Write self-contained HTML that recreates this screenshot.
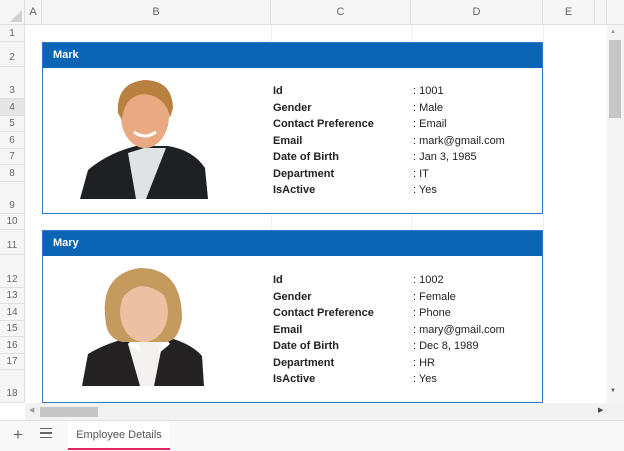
<html><head><style>
body{margin:0;width:624px;height:451px;overflow:hidden;background:#fff;font-family:"Liberation Sans",Arial,sans-serif;position:relative}
div{position:absolute;box-sizing:border-box}
.ch{top:0;height:25px;background:#f6f6f6;border-right:1px solid #e0e0e0;border-bottom:1px solid #e0e0e0;font-size:11px;color:#666;text-align:center;line-height:25px}
.rh{left:0;width:25px;background:#f6f6f6;border-bottom:1px solid #e0e0e0;border-right:1px solid #e0e0e0;font-size:10px;color:#666;text-align:center}
.card{left:42px;width:501px;border:1px solid #2e7bcf;background:#fff}
.hd{left:0;top:0;width:100%;height:25px;background:#0b64b4;color:#fff;font-weight:bold;font-size:11px;line-height:24px;padding-left:10px}
.t{font-size:11px;color:#222;line-height:16.5px;white-space:nowrap}
.t b{font-weight:bold}
</style></head><body>
<div style="left:0;top:0;width:25px;height:25px;background:#f6f6f6;border-right:1px solid #e0e0e0;border-bottom:1px solid #e0e0e0"><svg width="24" height="24"><polygon points="22,10 22,22 10,22" fill="#d0d0d0"/></svg></div>
<div class="ch" style="left:25px;width:17px">A</div>
<div class="ch" style="left:42px;width:229px">B</div>
<div class="ch" style="left:271px;width:140px">C</div>
<div class="ch" style="left:411px;width:132px">D</div>
<div class="ch" style="left:543px;width:52px">E</div>
<div class="ch" style="left:595px;width:12px"></div>
<div class="ch" style="left:607px;width:17px;border-right:none"></div>
<div class="rh" style="top:25px;height:17px;line-height:17px">1</div>
<div class="rh" style="top:42px;height:25px;line-height:32px">2</div>
<div class="rh" style="top:67px;height:32px;line-height:48px">3</div>
<div class="rh" style="top:99px;height:17px;line-height:17px;background:#e6e6e6">4</div>
<div class="rh" style="top:116px;height:16px;line-height:16px">5</div>
<div class="rh" style="top:132px;height:17px;line-height:17px">6</div>
<div class="rh" style="top:149px;height:16px;line-height:16px">7</div>
<div class="rh" style="top:165px;height:17px;line-height:17px">8</div>
<div class="rh" style="top:182px;height:32px;line-height:48px">9</div>
<div class="rh" style="top:214px;height:16px;line-height:16px">10</div>
<div class="rh" style="top:230px;height:25px;line-height:32px">11</div>
<div class="rh" style="top:255px;height:33px;line-height:50px">12</div>
<div class="rh" style="top:288px;height:16px;line-height:16px">13</div>
<div class="rh" style="top:304px;height:17px;line-height:17px">14</div>
<div class="rh" style="top:321px;height:16px;line-height:16px">15</div>
<div class="rh" style="top:337px;height:17px;line-height:17px">16</div>
<div class="rh" style="top:354px;height:16px;line-height:16px">17</div>
<div class="rh" style="top:370px;height:33px;line-height:48px">18</div>
<div style="left:271px;top:25px;width:1px;height:378px;background:#f0f0f0"></div>
<div style="left:411px;top:25px;width:1px;height:378px;background:#f0f0f0"></div>
<div style="left:543px;top:25px;width:1px;height:378px;background:#f0f0f0"></div>

<div class="card" style="top:42px;height:172px"><div class="hd">Mark</div></div>
<div class="card" style="top:230px;height:173px"><div class="hd">Mary</div></div>

<div class="t" style="left:273px;top:83px"><b>Id<br>Gender<br>Contact Preference<br>Email<br>Date of Birth<br>Department<br>IsActive</b></div>
<div class="t" style="left:413px;top:83px">: 1001<br>: Male<br>: Email<br>: mark@gmail.com<br>: Jan 3, 1985<br>: IT<br>: Yes</div>
<div class="t" style="left:273px;top:272px"><b>Id<br>Gender<br>Contact Preference<br>Email<br>Date of Birth<br>Department<br>IsActive</b></div>
<div class="t" style="left:413px;top:272px">: 1002<br>: Female<br>: Phone<br>: mary@gmail.com<br>: Dec 8, 1989<br>: HR<br>: Yes</div>

<svg style="position:absolute;left:78px;top:78px" width="132" height="124">
<path d="M2,121 L10,92 Q30,75 58,68 L90,68 Q115,72 127,90 L130,121 Z" fill="#1f2024"/>
<path d="M50,75 L66,70 L88,70 L68,121 L58,121 Z" fill="#dfe3e6"/>
<ellipse cx="67" cy="38" rx="24" ry="32" fill="#e9a982"/>
<path d="M40,35 Q38,5 66,2 Q94,2 95,30 L92,40 Q88,18 66,16 Q46,18 44,42 Z" fill="#b9813f"/>
<path d="M56,54 Q67,62 78,54" stroke="#fff" stroke-width="3" fill="none"/>
</svg>
<svg style="position:absolute;left:78px;top:264px" width="132" height="124">
<path d="M4,122 L10,90 Q30,78 58,72 L84,72 Q112,78 124,92 L126,122 Z" fill="#242122"/>
<path d="M50,80 L64,72 L86,72 L76,122 L62,122 Z" fill="#f4f2f0"/>
<path d="M50,80 L56,72 L64,88 Z M86,72 L92,80 L80,90 Z" fill="#fff"/>
<path d="M28,60 Q20,10 62,4 Q104,4 104,55 Q100,80 84,78 L44,78 Q30,74 28,60 Z" fill="#c59a5e"/>
<ellipse cx="66" cy="48" rx="24" ry="30" fill="#ecc0a2"/>
<path d="M40,40 Q44,14 68,14 Q86,16 92,38 Q80,22 62,22 Q48,26 40,40 Z" fill="#c59a5e"/>
</svg>

<div style="left:607px;top:25px;width:17px;height:378px;background:#f4f4f4"></div>
<div style="left:609px;top:40px;width:12px;height:78px;background:#c6c6c6"></div>
<div style="left:610px;top:29px;font-size:6px;color:#999">▲</div>
<div style="left:610px;top:388px;font-size:6px;color:#555">▼</div>
<div style="left:25px;top:403px;width:599px;height:17px;background:#f2f2f2"></div>
<div style="left:40px;top:407px;width:58px;height:10px;background:#c6c6c6"></div>
<div style="left:29px;top:406px;font-size:7px;color:#999">◀</div>
<div style="left:598px;top:406px;font-size:7px;color:#444">▶</div>
<div style="left:0;top:420px;width:624px;height:31px;background:#f8f8f8;border-top:1px solid #e0e0e0"></div>
<div style="left:13px;top:425px;font-size:17px;color:#666">+</div>
<div style="left:40px;top:428px;width:12px;height:10px;border-top:1.5px solid #666;border-bottom:1.5px solid #666"><div style="left:0;top:3px;width:12px;height:1.5px;background:#666"></div></div>
<div style="left:68px;top:421px;width:102px;height:29px;background:#fff;border-bottom:2px solid #e0245e;font-size:11px;color:#555;text-align:center;line-height:28px;white-space:nowrap">Employee Details</div>
</body></html>
